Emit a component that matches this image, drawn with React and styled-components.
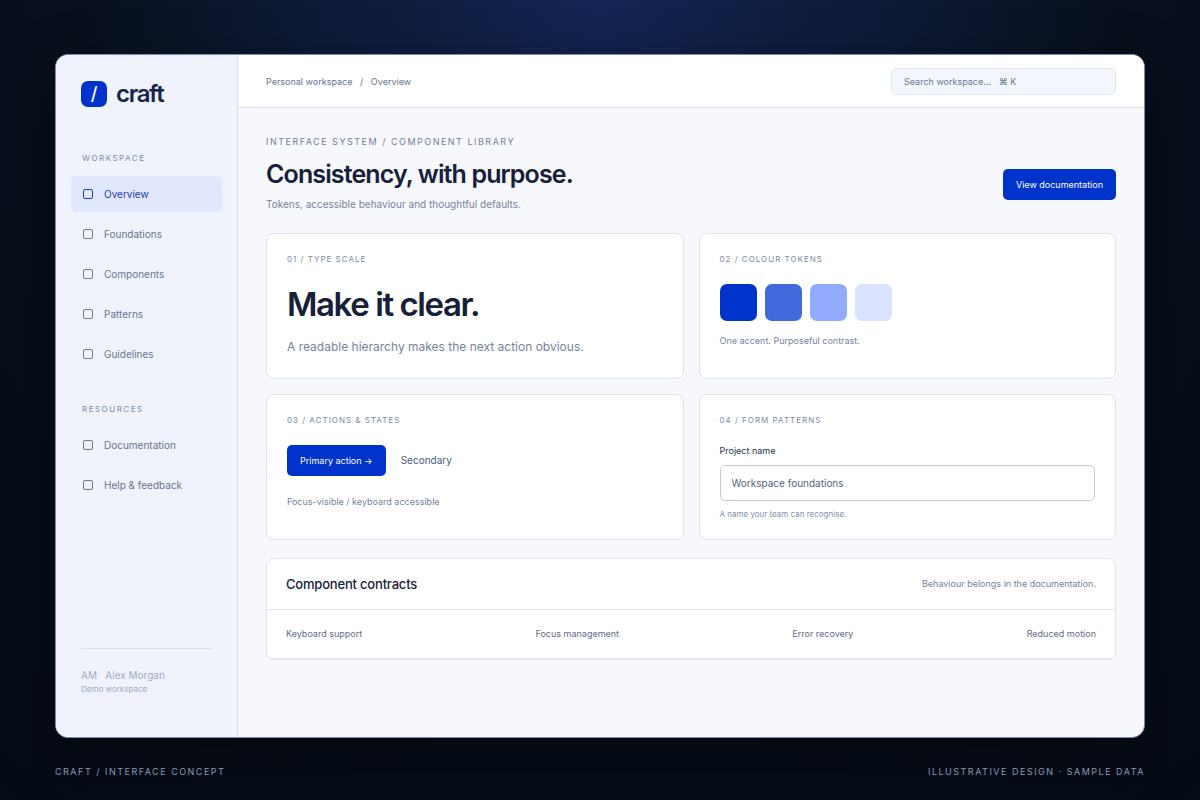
import React from "react";
import styled, { createGlobalStyle } from "styled-components";

const GlobalStyle = createGlobalStyle`
  *, *::before, *::after { box-sizing: border-box; }
  body {
    margin: 0;
    background: #060c17;
    font-family: Inter, "Liberation Sans", sans-serif;
    font-size: 10px;
    line-height: 14px;
    color: #17203a;
  }
  h1, h2, p, ul { margin: 0; padding: 0; }
  ul { list-style: none; }
  button, input { font-family: inherit; }
`;

const Page = styled.div`
  min-height: 100vh;
  display: flex;
  flex-direction: column;
  padding: 54px 55px 0;
  background: radial-gradient(circle at 50% 0, #142554 0, #08101d 52%, #060c17 100%);
`;

const Window = styled.div`
  flex: 1;
  display: flex;
  overflow: hidden;
  border: 1px solid #7d8cb4;
  border-radius: 13px;
  background: #f6f8fc;
  box-shadow: 0 20px 60px rgba(0, 0, 0, 0.45);
`;

const Sidebar = styled.aside`
  flex: 0 0 182px;
  display: flex;
  flex-direction: column;
  padding: 26px 15px 43px;
  border-right: 1px solid #dadfec;
  background: #f0f3fc;
`;

const Brand = styled.a`
  display: flex;
  align-items: center;
  gap: 9px;
  margin: 0 10px 46px;
  font-size: 24px;
  line-height: 26px;
  font-weight: 600;
  letter-spacing: -0.055em;
  color: #17254c;
  text-decoration: none;
`;

const BrandMark = styled.span`
  width: 26px;
  height: 26px;
  border-radius: 7px;
  background: #0033cc;
  color: #fff;
  font-size: 18px;
  font-weight: 500;
  letter-spacing: 0;
  text-align: center;
`;

const NavGroup = styled.nav`
  display: flex;
  flex-direction: column;
  gap: 4px;
  margin-bottom: 32px;
`;

const NavLabel = styled.span`
  margin: 0 11px 9px;
  font-size: 8px;
  line-height: 10px;
  letter-spacing: 1.5px;
  color: #7f8ba6;
`;

const NavItem = styled.a`
  display: flex;
  align-items: center;
  gap: 11px;
  height: 36px;
  padding: 0 12px;
  border-radius: 5px;
  background: ${(p) => (p.$active ? "#e1e8fd" : "transparent")};
  color: ${(p) => (p.$active ? "#1a41b8" : "#69758f")};
  text-decoration: none;

  &::before {
    content: "";
    width: 10px;
    height: 10px;
    border: 1px solid currentColor;
    border-radius: 2px;
  }
`;

const Account = styled.div`
  margin: auto 10px 0;
  padding-top: 19px;
  border-top: 1px solid #d8dfec;
  color: #a0abc1;
`;

const AccountName = styled.div`
  margin-bottom: 2px;
  white-space: pre;
`;

const AccountNote = styled.div`
  font-size: 8px;
  line-height: 10px;
`;

const Content = styled.div`
  flex: 1;
  min-width: 0;
`;

const TopBar = styled.header`
  display: flex;
  align-items: center;
  justify-content: space-between;
  height: 53px;
  padding: 0 28px;
  border-bottom: 1px solid #dae1ec;
  background: #fff;
`;

const Breadcrumb = styled.nav`
  padding-top: 1px;
  font-size: 9px;
  line-height: 12px;
  white-space: pre;
  color: #66738d;

  a { color: inherit; text-decoration: none; }
`;

const Search = styled.input`
  width: 225px;
  height: 27px;
  padding: 0 12px;
  border: 1px solid #dfe4f1;
  border-radius: 5px;
  background: #f4f6fd;
  font-size: 9px;
  color: #17203a;

  &::placeholder { color: #6c7993; opacity: 1; }
`;

const Main = styled.main`
  padding: 28px;
`;

const Eyebrow = styled.p`
  margin-bottom: 10px;
  font-size: 9px;
  line-height: 12px;
  letter-spacing: 1.5px;
  color: #72809c;
`;

const Hero = styled.div`
  display: flex;
  align-items: center;
  justify-content: space-between;
  margin-bottom: 22px;
`;

const Title = styled.h1`
  margin-bottom: 7px;
  font-size: 25px;
  line-height: 32px;
  font-weight: 600;
  letter-spacing: -0.035em;
`;

const textLine = { 9: 12, 10: 14, 12: 16 };

const Text = styled.p`
  font-size: ${(p) => p.$size || 9}px;
  line-height: ${(p) => textLine[p.$size || 9]}px;
  color: #76839c;
`;

const PrimaryButton = styled.button`
  height: 31px;
  padding: 0 13px;
  border: 0;
  border-radius: 5px;
  background: #0033cc;
  color: #fff;
  font-size: 9px;
`;

const TextButton = styled.button`
  padding: 0 0 1px;
  border: 0;
  background: none;
  color: #4a5c85;
  font-size: 10px;
  line-height: 14px;
`;

const Cards = styled.div`
  display: grid;
  grid-template-columns: 1fr 1fr;
  gap: 15px;
  margin-bottom: 18px;
`;

const Card = styled.section`
  min-height: 146px;
  padding: 20px;
  border: 1px solid #dde3ef;
  border-radius: 8px;
  background: #fff;
`;

const CardLabel = styled.p`
  margin-bottom: 20px;
  font-size: 8px;
  line-height: 10px;
  letter-spacing: 1px;
  color: #7d89a2;
`;

const Specimen = styled.h2`
  margin-bottom: 15px;
  font-size: 33px;
  line-height: 40px;
  font-weight: 600;
  letter-spacing: -0.043em;
`;

const Swatches = styled.div`
  display: flex;
  gap: 8px;
  margin-bottom: 14px;
`;

const Swatch = styled.span`
  width: 37px;
  height: 37px;
  border-radius: 7px;
  background: ${(p) => p.$color};
`;

const Actions = styled.div`
  display: flex;
  align-items: center;
  gap: 15px;
  margin-bottom: 20px;
`;

const Field = styled.div`
  display: flex;
  flex-direction: column;
  gap: 8px;
`;

const FieldLabel = styled.label`
  font-size: 9px;
  line-height: 12px;
  color: #28324b;
`;

const FieldInput = styled.input`
  width: 100%;
  height: 36px;
  padding: 0 11px;
  border: 1px solid #c3cade;
  border-radius: 5px;
  background: #fff;
  color: #54647f;
  font-size: 10px;
`;

const FieldHint = styled.span`
  font-size: 8px;
  line-height: 10px;
  color: #8491a8;
`;

const Panel = styled.section`
  border: 1px solid #dde3ef;
  border-radius: 8px;
  background: #fff;
  overflow: hidden;
`;

const PanelHead = styled.div`
  display: flex;
  align-items: center;
  justify-content: space-between;
  height: 51px;
  padding: 0 19px;
  border-bottom: 1px solid #e2e7f1;
`;

const PanelTitle = styled.h2`
  font-size: 13px;
  line-height: 18px;
  font-weight: 500;
  letter-spacing: -0.015em;
`;

const PanelRow = styled.ul`
  display: flex;
  align-items: center;
  justify-content: space-between;
  height: 49px;
  padding: 0 19px;
  border-bottom: 1px solid #e2e7f1;
  font-size: 9px;
  color: #5f6c87;
`;

const Caption = styled.footer`
  display: flex;
  justify-content: space-between;
  padding: 28px 0 22px;
  font-size: 9px;
  line-height: 12px;
  letter-spacing: 1.5px;
  color: #8d98b4;
`;

const workspaceLinks = ["Overview", "Foundations", "Components", "Patterns", "Guidelines"];
const resourceLinks = ["Documentation", "Help & feedback"];
const swatches = ["#0033cc", "#4169dc", "#92aaff", "#dae3ff"];
const contracts = ["Keyboard support", "Focus management", "Error recovery", "Reduced motion"];

function NavSection({ label, links, active }) {
  return (
    <NavGroup aria-label={label}>
      <NavLabel>{label}</NavLabel>
      {links.map((link) => (
        <NavItem key={link} href="#" $active={link === active}>
          {link}
        </NavItem>
      ))}
    </NavGroup>
  );
}

export default function App() {
  return (
    <>
      <GlobalStyle />
      <Page>
        <Window>
          <Sidebar>
            <Brand href="#">
              <BrandMark>/</BrandMark>craft
            </Brand>
            <NavSection label="WORKSPACE" links={workspaceLinks} active="Overview" />
            <NavSection label="RESOURCES" links={resourceLinks} />
            <Account>
              <AccountName>{"AM   Alex Morgan"}</AccountName>
              <AccountNote>Demo workspace</AccountNote>
            </Account>
          </Sidebar>
          <Content>
            <TopBar>
              <Breadcrumb aria-label="Breadcrumb">
                <a href="#">Personal workspace</a>
                {"   /   Overview"}
              </Breadcrumb>
              <Search
                type="search"
                aria-label="Search workspace"
                placeholder={"Search workspace…\u00a0\u00a0 ⌘ K"}
              />
            </TopBar>
            <Main>
              <Eyebrow>INTERFACE SYSTEM / COMPONENT LIBRARY</Eyebrow>
              <Hero>
                <div>
                  <Title>Consistency, with purpose.</Title>
                  <Text $size={10}>Tokens, accessible behaviour and thoughtful defaults.</Text>
                </div>
                <PrimaryButton type="button">View documentation</PrimaryButton>
              </Hero>
              <Cards>
                <Card>
                  <CardLabel>01 / TYPE SCALE</CardLabel>
                  <Specimen>Make it clear.</Specimen>
                  <Text $size={12}>A readable hierarchy makes the next action obvious.</Text>
                </Card>
                <Card>
                  <CardLabel>02 / COLOUR TOKENS</CardLabel>
                  <Swatches>
                    {swatches.map((color) => (
                      <Swatch key={color} $color={color} />
                    ))}
                  </Swatches>
                  <Text>One accent. Purposeful contrast.</Text>
                </Card>
                <Card>
                  <CardLabel>03 / ACTIONS &amp; STATES</CardLabel>
                  <Actions>
                    <PrimaryButton type="button">Primary action →</PrimaryButton>
                    <TextButton type="button">Secondary</TextButton>
                  </Actions>
                  <Text>Focus-visible / keyboard accessible</Text>
                </Card>
                <Card>
                  <CardLabel>04 / FORM PATTERNS</CardLabel>
                  <Field>
                    <FieldLabel htmlFor="project-name">Project name</FieldLabel>
                    <FieldInput
                      id="project-name"
                      type="text"
                      defaultValue="Workspace foundations"
                      aria-describedby="project-hint"
                    />
                    <FieldHint id="project-hint">A name your team can recognise.</FieldHint>
                  </Field>
                </Card>
              </Cards>
              <Panel>
                <PanelHead>
                  <PanelTitle>Component contracts</PanelTitle>
                  <Text>Behaviour belongs in the documentation.</Text>
                </PanelHead>
                <PanelRow>
                  {contracts.map((item) => (
                    <li key={item}>{item}</li>
                  ))}
                </PanelRow>
              </Panel>
            </Main>
          </Content>
        </Window>
        <Caption>
          <span>CRAFT / INTERFACE CONCEPT</span>
          <span>ILLUSTRATIVE DESIGN · SAMPLE DATA</span>
        </Caption>
      </Page>
    </>
  );
}
